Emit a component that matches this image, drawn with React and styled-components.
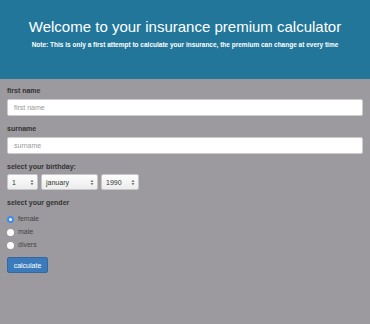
import React from "react";
import styled, { createGlobalStyle } from "styled-components";

const GlobalStyle = createGlobalStyle`
  html, body {
    margin: 0;
    padding: 0;
    background: #9c9a9e;
    font-family: "Liberation Sans", Arial, sans-serif;
  }
`;

const days = ["1", "2", "3"];
const months = ["january", "february", "march"];
const years = ["1990", "1991", "1992"];

const App = () => {
  return (
    <Page>
      <GlobalStyle />
      <Header>
        <Title>Welcome to your insurance premium calculator</Title>
        <Note>
          Note: This is only a first attempt to calculate your insurance, the
          premium can change at every time
        </Note>
      </Header>
      <Form>
        <Group>
          <Label>first name</Label>
          <Input placeholder="first name" />
        </Group>
        <Group>
          <Label>surname</Label>
          <Input placeholder="surname" />
        </Group>
        <Group>
          <Label space={3}>select your birthday:</Label>
          <SelectRow>
            <Select width={31} options={days} />
            <Select width={57} options={months} />
            <Select width={38} options={years} />
          </SelectRow>
        </Group>
        <Group>
          <Label>select your gender</Label>
          <Radios>
            <RadioLabel>
              <Radio checked />
              female
            </RadioLabel>
            <RadioLabel>
              <Radio />
              male
            </RadioLabel>
            <RadioLabel>
              <Radio />
              divers
            </RadioLabel>
          </Radios>
        </Group>
        <Button>calculate</Button>
      </Form>
    </Page>
  );
};
export default App;

const Select = ({ width, options }) => (
  <SelectBox width={width}>
    <span>{options[0]}</span>
    <svg width="4" height="7" viewBox="0 0 4 7">
      <path d="M0.5 2.8 L2 1 L3.5 2.8 Z M0.5 4.2 L2 6 L3.5 4.2 Z" fill="#555" />
    </svg>
  </SelectBox>
);

const Page = styled.div`
  width: 370px;
  min-height: 324px;
  background: #9c9a9e;
`;

const Header = styled.div`
  background: #21769a;
  height: 79px;
  box-sizing: border-box;
  padding-top: 17px;
  text-align: center;
  color: #fff;
`;

const Title = styled.h1`
  margin: 0;
  font-size: 15px;
  font-weight: normal;
  line-height: 19px;
`;

const Note = styled.p`
  margin: 4px 0 0;
  font-size: 6.5px;
  font-weight: bold;
  line-height: 9px;
`;

const Form = styled.div`
  padding: 7px 7px 0;
  display: flex;
  flex-direction: column;
`;

const Group = styled.div`
  display: flex;
  flex-direction: column;
  margin-bottom: 8px;
`;

const Label = styled.label`
  font-size: 7px;
  font-weight: bold;
  color: #333;
  line-height: 9px;
  margin-bottom: ${({ space }) => (space !== undefined ? space : 4)}px;
`;

const Input = styled.div.attrs(({ placeholder }) => ({
  children: placeholder,
}))`
  height: 17px;
  box-sizing: border-box;
  background: #fff;
  border: 1px solid #ccc;
  border-radius: 2px;
  padding: 0 6px;
  font-size: 7px;
  line-height: 15px;
  color: #999;
`;

const SelectRow = styled.div`
  display: flex;
  gap: 3px;
`;

const SelectBox = styled.div`
  width: ${({ width }) => width}px;
  height: 16px;
  box-sizing: border-box;
  background: linear-gradient(#fdfdfd, #ececec);
  border: 1px solid #c8c8c8;
  border-radius: 2px;
  display: flex;
  align-items: center;
  justify-content: space-between;
  padding: 0 3px 0 4px;
  font-size: 7px;
  color: #333;
`;

const Radios = styled.div`
  display: flex;
  flex-direction: column;
  gap: 5px;
  margin-top: 4px;
`;

const RadioLabel = styled.div`
  display: flex;
  align-items: center;
  gap: 4px;
  font-size: 7px;
  color: #444;
  line-height: 8px;
`;

const Radio = styled.span`
  width: 7px;
  height: 7px;
  box-sizing: border-box;
  border-radius: 50%;
  background: #fff;
  border: ${({ checked }) => (checked ? "2px solid #3b8cf0" : "none")};
`;

const Button = styled.button`
  align-self: flex-start;
  width: 41px;
  height: 16px;
  padding: 0;
  margin-top: 0;
  background: #3b7bbb;
  border: 1px solid #35699e;
  border-radius: 2px;
  color: #fff;
  font-family: "Liberation Sans", Arial, sans-serif;
  font-size: 7px;
`;
